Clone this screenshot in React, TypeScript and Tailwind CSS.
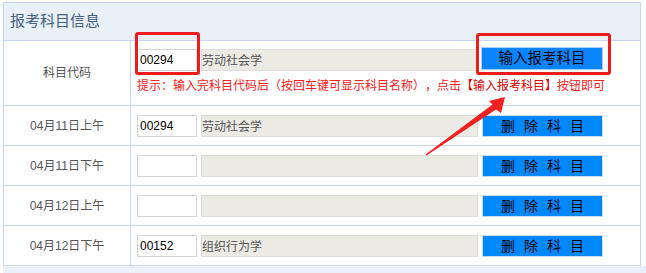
const font = "font-['Liberation_Sans','Noto_Sans_CJK_SC',sans-serif]";

type Row = { date: string; code: string; name: string };

const rows: Row[] = [
  { date: "04月11日上午", code: "00294", name: "劳动社会学" },
  { date: "04月11日下午", code: "", name: "" },
  { date: "04月12日上午", code: "", name: "" },
  { date: "04月12日下午", code: "00152", name: "组织行为学" },
];

function CodeBox({ value }: { value: string }) {
  return (
    <div className="flex h-[22px] w-[60px] shrink-0 items-center border border-[#d4d4d4] bg-white pl-[2px] text-[12px] text-black">
      {value}
    </div>
  );
}

function NameBox({ value }: { value: string }) {
  return (
    <div className="flex h-[22px] w-[277px] shrink-0 items-end border border-[#dcdcd8] bg-[#ebeae4] pb-[1px] text-[12px] leading-[16px] text-[#555]">
      {value}
    </div>
  );
}

function DeleteButton() {
  return (
    <button className="flex h-[22px] w-[121px] items-center justify-center gap-[9px] border border-[#cfdcee] bg-[#0088ff] text-[14px] text-black">
      <span>删</span>
      <span>除</span>
      <span>科</span>
      <span>目</span>
    </button>
  );
}

export default function App() {
  return (
    <div className={`relative h-[273px] w-[646px] overflow-hidden bg-white pl-[3px] pt-[2px] ${font}`}>
      <div className="w-[638px] border border-b-0 border-[#c9d7ee]">
        <div className="flex h-[38px] items-center border-b border-[#c9d7ee] bg-[#e9f0f8] pl-[6px] text-[15px] text-[#46607e]">
          报考科目信息
        </div>

        <div className="grid grid-cols-[127px_1fr]">
          <div className="flex h-[65px] items-center justify-center border-b border-r border-[#c9d7ee] text-[12px] text-[#555]">
            科目代码
          </div>
          <div className="flex flex-col border-b border-[#c9d7ee] pl-[6px] pt-[8px]">
            <div className="flex items-center gap-[4px]">
              <CodeBox value="00294" />
              <NameBox value="劳动社会学" />
              <button className="-mt-[3px] ml-[-1px] flex h-[23px] w-[122px] items-center justify-center border border-[#a9cdf3] bg-[#0a84ff] text-[14.5px] text-black">
                输入报考科目
              </button>
            </div>
            <div className="mt-[7px] whitespace-nowrap text-[12px] leading-[16px] text-[#ff2020] [text-spacing-trim:space-all]">
              提示：输入完科目代码后（按回车键可显示科目名称），点击
              <span className="text-[#e00000]">【输入报考科目】</span>
              按钮即可
            </div>
          </div>

          {rows.map((row) => (
            <div key={row.date} className="contents">
              <div className="flex h-[40px] items-center justify-center border-b border-r border-[#c9d7ee] text-[12px] text-[#555]">
                {row.date}
              </div>
              <div className="flex h-[40px] items-center gap-[4px] border-b border-[#c9d7ee] pl-[6px] pt-[1px]">
                <CodeBox value={row.code} />
                <NameBox value={row.name} />
                <DeleteButton />
              </div>
            </div>
          ))}
        </div>
      </div>
      <div className="h-[10px] bg-[#eaf0f8]" />

      {/* annotation boxes */}
      <div className="absolute left-[135px] top-[32px] h-[43px] w-[65px] rounded-[3px] border-[3px] border-[#ee1b1b]" />
      <div className="absolute left-[476px] top-[33px] h-[42px] w-[135px] rounded-[3px] border-[3px] border-[#ee1b1b]" />

      <svg className="absolute left-0 top-0" width="646" height="273" viewBox="0 0 646 273">
        <polygon
          points="505,97 489,101 492.5,104.5 425.5,154.5 426.5,155.5 496,109.5 501,113"
          fill="#f52020"
        />
      </svg>
    </div>
  );
}
